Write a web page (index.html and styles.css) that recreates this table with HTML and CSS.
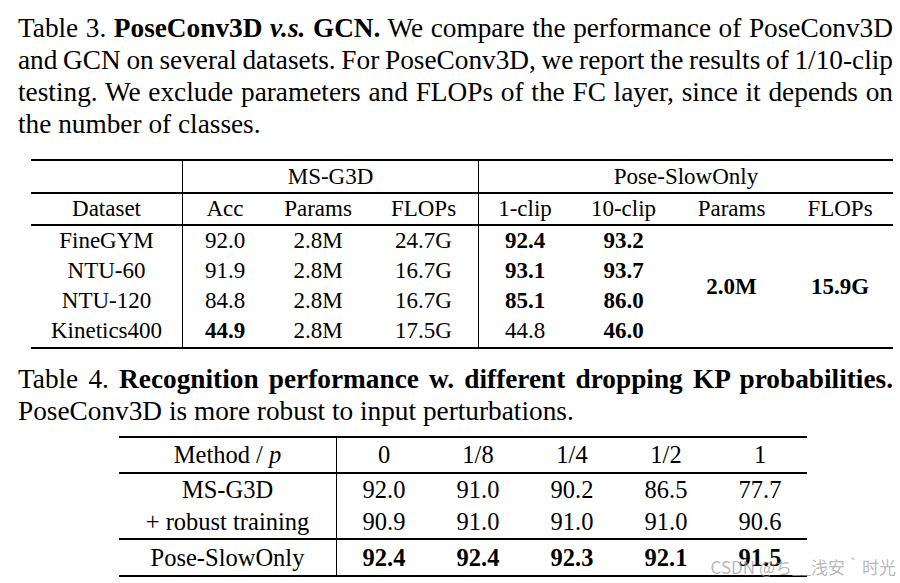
FILE: index.html
```html
<!DOCTYPE html>
<html>
<head>
<meta charset="utf-8">
<link rel="stylesheet" href="styles.css">
</head>
<body>
<div class="page">
  <p class="caption cap3">
    <span class="ln">Table 3. <b>PoseConv3D <i>v.s.</i> GCN.</b> We compare the performance of PoseConv3D</span>
    <span class="ln">and GCN on several datasets. For PoseConv3D, we report the results of 1/10-clip</span>
    <span class="ln">testing. We exclude parameters and FLOPs of the FC layer, since it depends on</span>
    <span class="ln last">the number of classes.</span>
  </p>

  <table class="tbl t3">
    <colgroup>
      <col class="c-ds"><col class="c-acc"><col class="c-par"><col class="c-flp">
      <col class="c-1c"><col class="c-10c"><col class="c-ppar"><col class="c-pflp">
    </colgroup>
    <tr class="h1">
      <td class="vr"></td>
      <td colspan="3" class="vr">MS-G3D</td>
      <td colspan="4">Pose-SlowOnly</td>
    </tr>
    <tr class="h2">
      <td class="vr">Dataset</td>
      <td>Acc</td><td>Params</td><td class="vr">FLOPs</td>
      <td>1-clip</td><td>10-clip</td><td>Params</td><td>FLOPs</td>
    </tr>
    <tr class="d">
      <td class="vr">FineGYM</td>
      <td>92.0</td><td>2.8M</td><td class="vr">24.7G</td>
      <td><b>92.4</b></td><td><b>93.2</b></td>
      <td rowspan="4" class="merged"><b>2.0M</b></td>
      <td rowspan="4" class="merged"><b>15.9G</b></td>
    </tr>
    <tr class="d">
      <td class="vr">NTU-60</td>
      <td>91.9</td><td>2.8M</td><td class="vr">16.7G</td>
      <td><b>93.1</b></td><td><b>93.7</b></td>
    </tr>
    <tr class="d">
      <td class="vr">NTU-120</td>
      <td>84.8</td><td>2.8M</td><td class="vr">16.7G</td>
      <td><b>85.1</b></td><td><b>86.0</b></td>
    </tr>
    <tr class="d lastrow">
      <td class="vr">Kinetics400</td>
      <td><b>44.9</b></td><td>2.8M</td><td class="vr">17.5G</td>
      <td>44.8</td><td><b>46.0</b></td>
    </tr>
  </table>

  <p class="caption cap4">
    <span class="ln">Table 4. <b>Recognition performance w. different dropping KP probabilities.</b></span>
    <span class="ln last">PoseConv3D is more robust to input perturbations.</span>
  </p>

  <table class="tbl t4">
    <colgroup>
      <col class="c-m"><col class="c-p"><col class="c-p"><col class="c-p"><col class="c-p"><col class="c-p">
    </colgroup>
    <tr class="hh">
      <td class="vr">Method / <i>p</i></td>
      <td>0</td><td>1/8</td><td>1/4</td><td>1/2</td><td>1</td>
    </tr>
    <tr class="r">
      <td class="vr">MS-G3D</td>
      <td>92.0</td><td>91.0</td><td>90.2</td><td>86.5</td><td>77.7</td>
    </tr>
    <tr class="r sep">
      <td class="vr">+ robust training</td>
      <td>90.9</td><td>91.0</td><td>91.0</td><td>91.0</td><td>90.6</td>
    </tr>
    <tr class="rl">
      <td class="vr">Pose-SlowOnly</td>
      <td><b>92.4</b></td><td><b>92.4</b></td><td><b>92.3</b></td><td><b>92.1</b></td><td><b>91.5</b></td>
    </tr>
  </table>

  <div class="watermark">CSDN @ち__浅安｀时光</div>
</div>
</body>
</html>
```

FILE: styles.css
```css
html, body {
  margin: 0;
  padding: 0;
  background: #ffffff;
}

.page {
  position: relative;
  width: 900px;
  height: 583px;
  overflow: hidden;
  padding: 12px 0 0 18px;
  box-sizing: border-box;
  color: #000;
  font-family: "Liberation Serif", "Times New Roman", serif;
}

.caption {
  margin: 0;
  width: 875px;
  font-size: 27.3px;
  line-height: 32px;
}

.caption .ln {
  display: block;
  white-space: nowrap;
  text-align: justify;
  text-align-last: justify;
  word-spacing: -3px;
}

.caption .ln.last {
  text-align-last: left;
  word-spacing: 0;
}

.cap4 {
  margin-top: 14px;
}

.tbl {
  border-collapse: separate;
  border-spacing: 0;
  table-layout: fixed;
  font-size: 23px;
  border-top: 2px solid #000;
  border-bottom: 2px solid #000;
}

.tbl td {
  padding: 0;
  text-align: center;
  white-space: nowrap;
  vertical-align: middle;
}

.tbl td.vr {
  border-right: 1px solid #000;
}

/* Table 3 */
.t3 {
  margin: 19px 0 0 13px;
  width: 862px;
}

.c-ds { width: 152px; }
.c-acc { width: 84px; }
.c-par { width: 102px; }
.c-flp { width: 110px; }
.c-1c { width: 92px; }
.c-10c { width: 105px; }
.c-ppar { width: 111px; }
.c-pflp { width: 106px; }

.t3 .h1 td {
  line-height: 31px;
  border-bottom: 2px solid #000;
}

.t3 .h2 td {
  line-height: 30px;
  border-bottom: 2px solid #000;
}

.t3 .d td {
  line-height: 30px;
}

.t3 .lastrow td {
  padding-bottom: 1px;
}

/* Table 4 */
.t4 {
  margin: 9px 0 0 101px;
  width: 688px;
  font-size: 24.5px;
}

.c-m { width: 218px; }
.c-p { width: 94px; }

.t4 .hh td {
  line-height: 34px;
  border-bottom: 2px solid #000;
}

.t4 .r td {
  line-height: 32px;
}

.t4 .sep td {
  border-bottom: 2px solid #000;
}

.t4 .rl td {
  line-height: 35px;
}

.watermark {
  position: absolute;
  right: 4px;
  top: 557px;
  font-family: "Noto Sans CJK SC", "Liberation Sans", sans-serif;
  font-size: 17px;
  line-height: 20px;
  color: rgba(160, 160, 160, 0.75);
  white-space: nowrap;
}
```
